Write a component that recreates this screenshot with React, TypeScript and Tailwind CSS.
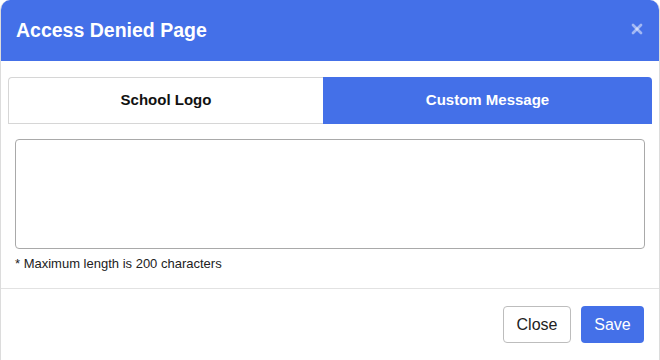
import { X } from "lucide-react";

const App = () => {
    return (
        <div
            className="h-[360px] w-[660px] overflow-hidden bg-white"
            style={{ fontFamily: '"Liberation Sans", Arial, sans-serif' }}
        >
            <div className="flex h-[372px] flex-col overflow-hidden rounded-t-[10px] border border-t-0 border-[#dcdcdc] bg-white">
                <div className="flex h-[61px] shrink-0 items-center justify-between bg-[#4470e8] pl-[15px] pr-[14px]">
                    <h1 className="text-[19.5px] font-bold text-white">Access Denied Page</h1>
                    <button type="button" aria-label="Close" className="-mt-[3px] text-white/50">
                        <X className="h-[16px] w-[16px]" strokeWidth={4} />
                    </button>
                </div>
                <div className="px-[7px] pt-[16px]">
                    <div className="flex h-[47px]">
                        <button
                            type="button"
                            className="flex-1 rounded-tl-[4px] border border-[#d6d6d6] border-r-0 bg-white text-[15px] font-bold text-[#111]"
                        >
                            School Logo
                        </button>
                        <button
                            type="button"
                            className="w-[329px] rounded-tr-[4px] bg-[#4470e8] text-[15px] font-bold text-white"
                        >
                            Custom Message
                        </button>
                    </div>
                </div>
                <div className="px-[14px] pt-[15px]">
                    <textarea className="block h-[110px] w-full resize-none rounded-[4px] border border-[#a9a9a9] outline-none" />
                    <p className="mt-[7px] text-[13px] leading-[15px] text-[#222]">
                        * Maximum length is 200 characters
                    </p>
                </div>
                <div className="mt-[17px] border-t border-[#e2e2e2]" />
                <div className="flex justify-end gap-[10px] px-[15px] pt-[17px]">
                    <button
                        type="button"
                        className="h-[37px] w-[68px] rounded-[4px] border border-[#bdbdbd] bg-white text-[16px] text-[#222]"
                    >
                        Close
                    </button>
                    <button
                        type="button"
                        className="h-[37px] w-[63px] rounded-[4px] bg-[#4470e8] text-[16px] text-white"
                    >
                        Save
                    </button>
                </div>
            </div>
        </div>
    );
};

export default App;
